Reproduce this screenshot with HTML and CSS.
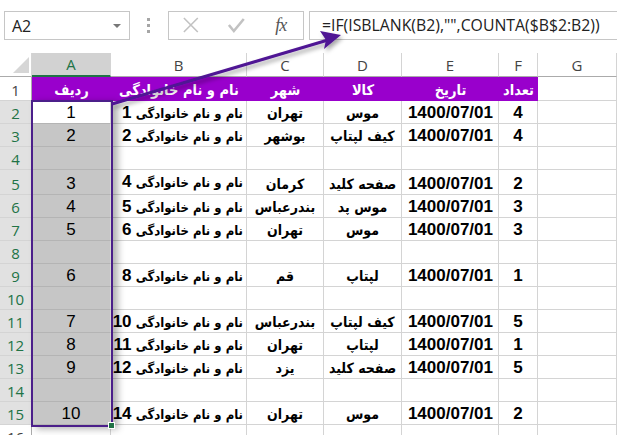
FILE: index.html
```html
<!DOCTYPE html>
<html>
<head>
  <link rel="stylesheet" href="styles.css">
</head>
<body>
  <div class="app">
    <div class="toolbar">
      <div class="namebox"><span>A2</span><span class="caret"></span></div>
      <div class="grip"><i></i><i></i><i></i></div>
      <div class="fxbox">
        <svg class="btn" width="45" height="27" viewBox="0 0 45 27">
          <path d="M15 6 L29 20 M29 6 L15 20" stroke="#c2c2c2" stroke-width="1.6" fill="none"/>
        </svg>
        <svg class="btn" width="45" height="27" viewBox="0 0 45 27">
          <path d="M15 13 L20 19 L30 7" stroke="#c2c2c2" stroke-width="2.6" fill="none"/>
        </svg>
        <span class="fx">fx</span>
      </div>
      <div class="formula">=IF(ISBLANK(B2),"",COUNTA($B$2:B2))</div>
    </div>

    <div class="sheet">
      <div class="corner"><svg width="16" height="16"><polygon points="16,0 16,16 0,16" fill="#d6d6d6"/></svg></div>
      <div class="colhead active">A</div>
      <div class="colhead">B</div>
      <div class="colhead">C</div>
      <div class="colhead">D</div>
      <div class="colhead">E</div>
      <div class="colhead">F</div>
      <div class="colhead">G</div>

      <div class="rowhead plain">1</div>
      <div class="cell title">ردیف</div>
      <div class="cell title">نام و نام خانوادگی</div>
      <div class="cell title">شهر</div>
      <div class="cell title">کالا</div>
      <div class="cell title">تاریخ</div>
      <div class="cell title">تعداد</div>
      <div class="cell"></div>

      <div class="rowhead">2</div>
      <div class="cell num current">1</div>
      <div class="cell name">نام و نام خانوادگی <span class="n">1</span></div>
      <div class="cell mid">تهران</div>
      <div class="cell mid">موس</div>
      <div class="cell date">1400/07/01</div>
      <div class="cell qty">4</div>
      <div class="cell"></div>

      <div class="rowhead">3</div>
      <div class="cell num">2</div>
      <div class="cell name">نام و نام خانوادگی <span class="n">2</span></div>
      <div class="cell mid">بوشهر</div>
      <div class="cell mid">کیف لپتاپ</div>
      <div class="cell date">1400/07/01</div>
      <div class="cell qty">4</div>
      <div class="cell"></div>

      <div class="rowhead">4</div>
      <div class="cell num"></div>
      <div class="cell"></div>
      <div class="cell"></div>
      <div class="cell"></div>
      <div class="cell"></div>
      <div class="cell"></div>
      <div class="cell"></div>

      <div class="rowhead">5</div>
      <div class="cell num">3</div>
      <div class="cell name">نام و نام خانوادگی <span class="n">4</span></div>
      <div class="cell mid">کرمان</div>
      <div class="cell mid">صفحه کلید</div>
      <div class="cell date">1400/07/01</div>
      <div class="cell qty">2</div>
      <div class="cell"></div>

      <div class="rowhead">6</div>
      <div class="cell num">4</div>
      <div class="cell name">نام و نام خانوادگی <span class="n">5</span></div>
      <div class="cell mid">بندرعباس</div>
      <div class="cell mid">موس پد</div>
      <div class="cell date">1400/07/01</div>
      <div class="cell qty">3</div>
      <div class="cell"></div>

      <div class="rowhead">7</div>
      <div class="cell num">5</div>
      <div class="cell name">نام و نام خانوادگی <span class="n">6</span></div>
      <div class="cell mid">تهران</div>
      <div class="cell mid">موس</div>
      <div class="cell date">1400/07/01</div>
      <div class="cell qty">3</div>
      <div class="cell"></div>

      <div class="rowhead">8</div>
      <div class="cell num"></div>
      <div class="cell"></div>
      <div class="cell"></div>
      <div class="cell"></div>
      <div class="cell"></div>
      <div class="cell"></div>
      <div class="cell"></div>

      <div class="rowhead">9</div>
      <div class="cell num">6</div>
      <div class="cell name">نام و نام خانوادگی <span class="n">8</span></div>
      <div class="cell mid">قم</div>
      <div class="cell mid">لپتاپ</div>
      <div class="cell date">1400/07/01</div>
      <div class="cell qty">1</div>
      <div class="cell"></div>

      <div class="rowhead">10</div>
      <div class="cell num"></div>
      <div class="cell"></div>
      <div class="cell"></div>
      <div class="cell"></div>
      <div class="cell"></div>
      <div class="cell"></div>
      <div class="cell"></div>

      <div class="rowhead">11</div>
      <div class="cell num">7</div>
      <div class="cell name">نام و نام خانوادگی <span class="n">10</span></div>
      <div class="cell mid">بندرعباس</div>
      <div class="cell mid">کیف لپتاپ</div>
      <div class="cell date">1400/07/01</div>
      <div class="cell qty">5</div>
      <div class="cell"></div>

      <div class="rowhead">12</div>
      <div class="cell num">8</div>
      <div class="cell name">نام و نام خانوادگی <span class="n">11</span></div>
      <div class="cell mid">تهران</div>
      <div class="cell mid">لپتاپ</div>
      <div class="cell date">1400/07/01</div>
      <div class="cell qty">1</div>
      <div class="cell"></div>

      <div class="rowhead">13</div>
      <div class="cell num">9</div>
      <div class="cell name">نام و نام خانوادگی <span class="n">12</span></div>
      <div class="cell mid">یزد</div>
      <div class="cell mid">صفحه کلید</div>
      <div class="cell date">1400/07/01</div>
      <div class="cell qty">5</div>
      <div class="cell"></div>

      <div class="rowhead">14</div>
      <div class="cell num"></div>
      <div class="cell"></div>
      <div class="cell"></div>
      <div class="cell"></div>
      <div class="cell"></div>
      <div class="cell"></div>
      <div class="cell"></div>

      <div class="rowhead">15</div>
      <div class="cell num">10</div>
      <div class="cell name">نام و نام خانوادگی <span class="n">14</span></div>
      <div class="cell mid">تهران</div>
      <div class="cell mid">موس</div>
      <div class="cell date">1400/07/01</div>
      <div class="cell qty">2</div>
      <div class="cell"></div>

      <div class="rowhead plain">16</div>
      <div class="cell"></div>
      <div class="cell"></div>
      <div class="cell"></div>
      <div class="cell"></div>
      <div class="cell"></div>
      <div class="cell"></div>
      <div class="cell"></div>
    </div>

    <!-- selected range A2:A15 -->
    <div class="selection"><span class="handle"></span></div>

    <!-- callout arrow to the formula bar -->
    <svg class="arrow" width="617" height="435">
      <defs>
        <filter id="shadow" x="-10%" y="-30%" width="130%" height="180%">
          <feDropShadow dx="2" dy="3" stdDeviation="2" flood-color="#000" flood-opacity="0.35"/>
        </filter>
      </defs>
      <g filter="url(#shadow)" fill="#4f1494" stroke="#4f1494">
        <line x1="112" y1="104" x2="328" y2="40" stroke-width="3"/>
        <polygon points="341,35 320,31 326,40 324,49" stroke="none"/>
      </g>
    </svg>
  </div>
</body>
</html>
```

FILE: styles.css
```css
body {
  margin: 0;
  background: #fff;
}

.app {
  position: relative;
  width: 617px;
  height: 435px;
  overflow: hidden;
  font-family: "Liberation Sans", "DejaVu Sans", sans-serif;
}

/* formula bar */
.toolbar {
  display: flex;
  align-items: flex-start;
  height: 53px;
  padding: 11px 0 0 4px;
  box-sizing: border-box;
  font-family: "Open Sans", "Noto Sans", sans-serif;
}

.namebox {
  width: 126px;
  height: 29px;
  box-sizing: border-box;
  border: 1px solid #c6c6c6;
  display: flex;
  align-items: center;
  justify-content: space-between;
  padding: 0 8px 0 7px;
  font-size: 16px;
  color: #222;
}

.caret {
  width: 0;
  height: 0;
  border-left: 4px solid transparent;
  border-right: 4px solid transparent;
  border-top: 4px solid #777;
}

.grip {
  display: flex;
  flex-direction: column;
  gap: 3px;
  margin: 7px 18px 0 17px;
}

.grip i {
  width: 3px;
  height: 3px;
  background: #a6a6a6;
}

.fxbox {
  width: 136px;
  height: 29px;
  box-sizing: border-box;
  border: 1px solid #c6c6c6;
  display: flex;
  align-items: center;
}

.btn {
  display: block;
}

.fx {
  width: 45px;
  text-align: center;
  font-family: "Liberation Serif", "DejaVu Serif", serif;
  font-style: italic;
  font-size: 18px;
  color: #555;
  letter-spacing: -1px;
}

.formula {
  flex: 1;
  height: 29px;
  margin-left: 5px;
  box-sizing: border-box;
  border: 1px solid #c6c6c6;
  border-right: none;
  padding: 2px 0 0 12px;
  font-size: 15.8px;
  color: #222;
}

/* worksheet grid */
.sheet {
  display: grid;
  grid-template-columns: 32px 79px 136px 77px 78px 97px 39px 79px;
  grid-template-rows: 24px 24px 23px 23px 23px 25px 23px 23px 23px 23px 23px 23px 23px 23px 23px 23px 23px;
}

.sheet > div {
  box-sizing: border-box;
  border-right: 1px solid #d4d4d4;
  border-bottom: 1px solid #d4d4d4;
  display: flex;
  align-items: flex-end;
  padding-bottom: 0;
  overflow: visible;
  white-space: nowrap;
}

.corner {
  justify-content: flex-end;
  padding: 0 2px 3px 0 !important;
  border-bottom-color: #ababab !important;
}

.colhead {
  justify-content: center;
  align-items: center !important;
  padding: 0 !important;
  font-family: "Open Sans", "Noto Sans", sans-serif;
  font-size: 15px;
  color: #444;
  border-bottom-color: #ababab !important;
}

.colhead.active {
  background: #d2d2d2;
  color: #217346;
  border-bottom: 2px solid #217346 !important;
}

.rowhead {
  justify-content: center;
  font-family: "Open Sans", "Noto Sans", sans-serif;
  font-size: 15px;
  color: #217346;
  background: #e1e1e1;
  border-right-color: #ababab !important;
}

.rowhead.plain {
  background: #fff;
  color: #444;
}

.cell {
  font-size: 17px;
  font-weight: bold;
  color: #000;
}

.title {
  background: #9900cc;
  color: #fff;
  justify-content: center;
  font-family: "DejaVu Sans Condensed", "DejaVu Sans", sans-serif;
  font-size: 14.5px;
  padding-bottom: 3px !important;
  border-right: none !important;
  border-bottom: none !important;
}

.num {
  background: #c6c6c6;
  justify-content: center;
  font-weight: normal;
  border-bottom-color: #b4b4b4 !important;
}

.num.current {
  background: #fff;
}

.sheet > .name {
  display: block;
  direction: rtl;
  line-height: 21px;
  padding: 1px 3px 0 0;
  font-family: "DejaVu Sans Condensed", "DejaVu Sans", sans-serif;
  font-size: 13px;
}

.name .n {
  font-family: "Liberation Sans", sans-serif;
  font-size: 17px;
}

.mid {
  justify-content: center;
  font-family: "DejaVu Sans Condensed", "DejaVu Sans", sans-serif;
  font-size: 14px;
  padding-bottom: 2px !important;
}

.date {
  justify-content: flex-end;
  padding-right: 5px;
}

.qty {
  justify-content: center;
}

/* overlays */
.selection {
  position: absolute;
  left: 31px;
  top: 100px;
  width: 82px;
  height: 327px;
  box-sizing: border-box;
  border: 2px solid #4b1f8a;
  box-shadow: 5px 2px 7px rgba(0, 0, 0, 0.3);
}

.handle {
  position: absolute;
  right: -4px;
  bottom: -4px;
  width: 5px;
  height: 5px;
  background: #217346;
  border: 1px solid #fff;
}

.arrow {
  position: absolute;
  left: 0;
  top: 0;
  pointer-events: none;
}
```
